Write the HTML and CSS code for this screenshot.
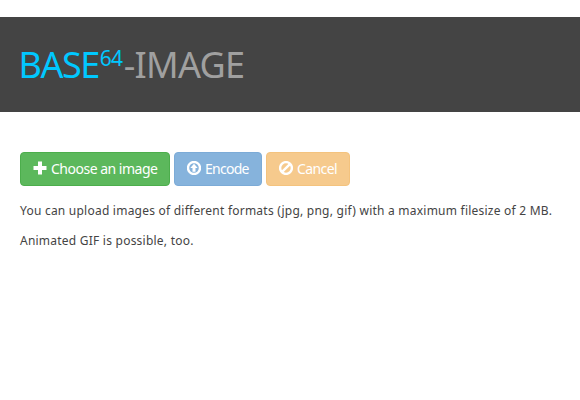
FILE: index.html
```html
<!DOCTYPE html>
<html lang="en">
<head>
<meta charset="utf-8">
<title>Base64-Image</title>
<link rel="stylesheet" href="styles.css">
</head>
<body>
<header class="header">
  <h1 class="title"><span class="brand">BASE<sup>64</sup></span><span class="rest">-IMAGE</span></h1>
</header>
<main class="content">
  <div class="actions">
    <button class="btn btn-choose"><svg class="icon" viewBox="0 0 14 14"><path d="M5 0.5h4v4.500h4.500v4H9v4.500H5V9H0.500V5H5z"/></svg><span class="label">Choose an image</span></button>
    <button class="btn btn-encode"><svg class="icon" viewBox="0 0 14 14"><circle class="ring" cx="7" cy="7" r="6"/><path d="M7 2.800L10.700 7H8.500v3.800h-3V7H3.300z"/></svg><span class="label">Encode</span></button>
    <button class="btn btn-cancel"><svg class="icon" viewBox="0 0 14 14"><circle class="ring" cx="7" cy="7" r="5.900"/><path class="ring" d="M3.100 10.900L10.900 3.100"/></svg><span class="label">Cancel</span></button>
  </div>
  <p class="text note">You can upload images of different formats (jpg, png, gif) with a maximum filesize of 2 MB.</p>
  <p class="text gif">Animated GIF is possible, too.</p>
</main>
</body>
</html>
```

FILE: styles.css
```css
* { box-sizing: border-box; }
body {
  margin: 0;
  padding-top: 17px;
  background: #fff;
  color: #444;
  font-family: "Noto Sans", "Open Sans", sans-serif;
  overflow: hidden;
}
.header {
  height: 95px;
  padding: 23px 18.5px 0;
  background: #444;
}
.title {
  margin: 0;
  font-size: 36px;
  font-weight: 400;
  line-height: 50px;
  white-space: nowrap;
  display: flex;
}
.brand { color: #00c8ff; letter-spacing: -1.5px; }
.brand sup {
  margin-left: 1px;
  font-size: 21px;
  line-height: 0;
  vertical-align: 12px;
  letter-spacing: -0.8px;
}
.rest { margin-left: 1.5px; color: #a0a0a0; letter-spacing: -0.7px; }
.content { padding: 40px 20px 0; }
.actions { display: flex; gap: 4px; }
.btn {
  display: flex;
  align-items: center;
  height: 34px;
  padding: 0 12px;
  border: 1px solid;
  border-radius: 4px;
  color: #fff;
  font: 14px/20px "Noto Sans", "Open Sans", sans-serif;
  white-space: nowrap;
}
.btn-choose { width: 150px; background: #5cb85c; border-color: #4cae4c; letter-spacing: -0.5px; }
.btn-encode { width: 88px; background: #86b3dc; border-color: #7cabd7; letter-spacing: -0.75px; }
.btn-cancel { width: 84px; background: #f6ca8d; border-color: #f4c37e; letter-spacing: -0.6px; }
.icon { flex: none; width: 14px; height: 14px; margin: 0 4px 2px 0; fill: #fff; }
.ring { fill: none; stroke: #fff; stroke-width: 2.4; }
.text { margin: 0; font-size: 12px; line-height: 20px; white-space: nowrap; letter-spacing: 0.23px; }
.note { margin-top: 15px; }
.gif { margin-top: 10px; }
```
